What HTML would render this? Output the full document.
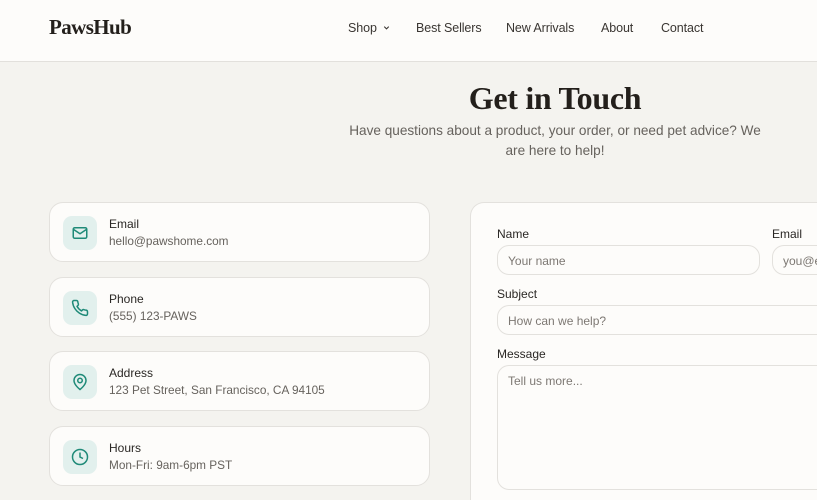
<!DOCTYPE html>
<html><head><style>
*{box-sizing:border-box;margin:0;padding:0}
html,body{width:817px;height:500px;overflow:hidden}
body{background:#f4f3ef;font-family:"Liberation Sans",sans-serif;color:#2a2724;position:relative}
.hdr{position:absolute;left:0;top:0;width:817px;height:62px;background:#fdfcfa;border-bottom:1px solid #e2e0dc}
.logo{position:absolute;left:49px;top:15px;font-family:"Liberation Serif",serif;font-weight:bold;font-size:21px;letter-spacing:-0.6px;color:#231f1b}
.nav{position:absolute;top:21px;font-size:12.5px;color:#3a3632;letter-spacing:-0.1px}
h1{position:absolute;left:355px;width:400px;text-align:center;top:80px;font-family:"Liberation Serif",serif;font-size:32px;font-weight:bold;color:#231f1b;letter-spacing:-0.3px}
.sub{position:absolute;left:342px;width:426px;text-align:center;top:121px;font-size:13.6px;line-height:20px;color:#66625d}
.card{position:absolute;left:49px;width:381px;height:60px;background:#fdfcfa;border:1px solid #e3e1dd;border-radius:14px}
.ic{position:absolute;left:13px;top:13px;width:34px;height:34px;border-radius:9px;background:#e2f0ed;display:flex;align-items:center;justify-content:center}
.t1{position:absolute;left:59px;top:14px;font-size:12px;color:#2a2724}
.t2{position:absolute;left:59px;top:31px;font-size:11.8px;color:#66625d}
.form{position:absolute;left:470px;top:202px;width:347px;height:298px;background:#fdfcfa;border:1px solid #e3e1dd;border-right:none;border-bottom:none;border-radius:14px 0 0 0}
.lb{position:absolute;font-size:12px;color:#2a2724}
.in{position:absolute;height:30px;border:1px solid #e3e1dd;border-radius:12px;background:#fdfcfa;font-size:12px;color:#7d7873;padding:8px 10px;overflow:hidden;white-space:nowrap}
.ro{border-right:none;border-radius:12px 0 0 12px}
</style></head><body>
<div class="hdr">
<div class="logo">PawsHub</div>
<div class="nav" style="left:348px">Shop <svg width="9" height="9" viewBox="0 0 10 10" style="margin-left:2px"><path d="M2.5 4l2.5 2.5L7.5 4" fill="none" stroke="#3a3632" stroke-width="1.2"/></svg></div>
<div class="nav" style="left:416px">Best Sellers</div>
<div class="nav" style="left:506px">New Arrivals</div>
<div class="nav" style="left:601px">About</div>
<div class="nav" style="left:661px">Contact</div>
</div>
<h1>Get in Touch</h1>
<div class="sub">Have questions about a product, your order, or need pet advice? We are here to help!</div>

<div class="card" style="top:202px"><div class="ic"><svg width="18" height="18" viewBox="0 0 24 24" fill="none" stroke="#1f8a78" stroke-width="2"><rect x="3" y="5" width="18" height="14" rx="2"/><path d="M3 7l9 6 9-6"/></svg></div><div class="t1">Email</div><div class="t2">hello@pawshome.com</div></div>
<div class="card" style="top:277px"><div class="ic"><svg width="18" height="18" viewBox="0 0 24 24" fill="none" stroke="#1f8a78" stroke-width="2" stroke-linejoin="round"><path d="M22 16.9v3a2 2 0 0 1-2.2 2 19.8 19.8 0 0 1-8.6-3.1 19.5 19.5 0 0 1-6-6A19.8 19.8 0 0 1 2.1 4.2 2 2 0 0 1 4.1 2h3a2 2 0 0 1 2 1.7c.1 1 .4 1.9.7 2.8a2 2 0 0 1-.5 2.1L8 9.9a16 16 0 0 0 6 6l1.3-1.3a2 2 0 0 1 2.1-.4c.9.3 1.8.6 2.8.7a2 2 0 0 1 1.7 2z"/></svg></div><div class="t1">Phone</div><div class="t2">(555) 123-PAWS</div></div>
<div class="card" style="top:351px"><div class="ic"><svg width="18" height="18" viewBox="0 0 24 24" fill="none" stroke="#1f8a78" stroke-width="2"><path d="M20 10c0 6-8 12-8 12s-8-6-8-12a8 8 0 0 1 16 0z"/><circle cx="12" cy="10" r="3"/></svg></div><div class="t1">Address</div><div class="t2">123 Pet Street, San Francisco, CA 94105</div></div>
<div class="card" style="top:426px"><div class="ic"><svg width="18" height="18" viewBox="0 0 24 24" fill="none" stroke="#1f8a78" stroke-width="2"><circle cx="12" cy="12" r="10"/><path d="M12 6v6l4 2"/></svg></div><div class="t1">Hours</div><div class="t2">Mon-Fri: 9am-6pm PST</div></div>

<div class="form"></div>
<div class="lb" style="left:497px;top:227px">Name</div>
<div class="lb" style="left:772px;top:227px">Email</div>
<div class="in" style="left:497px;top:245px;width:263px">Your name</div>
<div class="in ro" style="left:772px;top:245px;width:45px">you@example.com</div>
<div class="lb" style="left:497px;top:287px">Subject</div>
<div class="in ro" style="left:497px;top:305px;width:320px">How can we help?</div>
<div class="lb" style="left:497px;top:347px">Message</div>
<div class="in ro" style="left:497px;top:365px;width:320px;height:125px">Tell us more...</div>
</body></html>
